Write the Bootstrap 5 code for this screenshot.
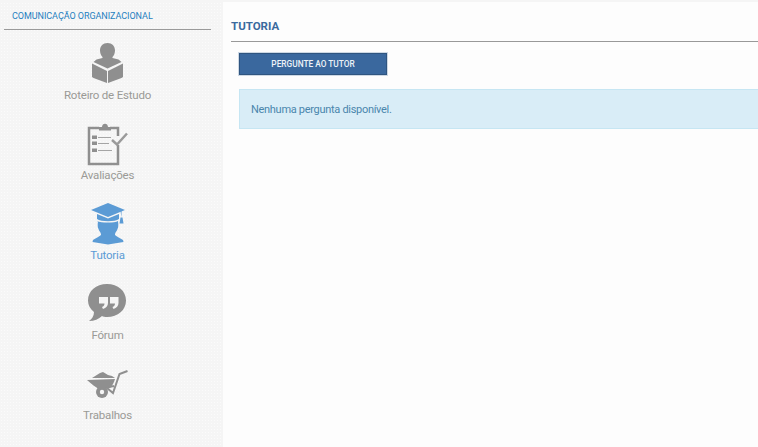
<!DOCTYPE html>
<html lang="pt">
<head>
<meta charset="utf-8">
<title>Tutoria</title>
<link href="https://cdn.jsdelivr.net/npm/bootstrap@5.3.0/dist/css/bootstrap.min.css" rel="stylesheet">
<style>
html,body{height:100%;overflow:hidden}
body{background:#f5f5f5;font-family:Roboto,"Liberation Sans",sans-serif;padding-top:2px}
.shell{height:445px}
.side{width:223px;flex:none;padding:0 12px 0 4px;background-image:radial-gradient(#fbfbfb .6px,transparent .8px);background-size:3px 3px}
.course{height:28px;border-bottom:1px solid #9a9a9a;padding-left:8px;padding-top:7px;font-size:9px;letter-spacing:-.05px;line-height:15px;color:#1f7fbf;white-space:nowrap}
.menu-entry{height:80px;color:#9a9a96;font-size:11.5px;letter-spacing:-.2px;line-height:14px;text-decoration:none}
.menu-entry:hover{color:#9a9a96}
.menu-entry.now,.menu-entry.now:hover{color:#5b9bd5}
.menu-entry svg{display:block;height:47px;width:60px}
.menu-wrap{padding-top:11px}
.pane{background:#fdfdfd;min-width:0}
.pane-title{margin:0 0 0 8px;height:40px;border-bottom:1px solid #999;padding-top:17px;font-size:11.5px;line-height:14px;font-weight:700;color:#3a6a9e}
.ask{display:block;width:148px;height:22px;margin:11px 0 0 16px;padding:0;background:#3a689e;border:1px solid #2f5580;border-radius:0;color:#eef3f8;font-size:8.3px;line-height:20px;font-weight:500;box-shadow:0 0 0 1px #cdd8e4}
.ask:hover{background:#3a689e;color:#eef3f8}
.notice{margin:14px 0 0 16px;height:40px;padding:0 11px;background:#d9edf7;border:1px solid #c6e6f3;border-right:0;border-radius:0;color:#4a86ad;font-size:11px;letter-spacing:-.3px;line-height:39px}
</style>
</head>
<body>
<div class="shell d-flex">
  <aside class="side">
    <div class="course">COMUNICAÇÃO ORGANIZACIONAL</div>
    <nav class="menu-wrap d-flex flex-column">
      <a href="#" class="menu-entry d-flex flex-column align-items-center">
        <svg viewBox="0 0 60 47" fill="#8f8f8f"><path d="M29.500 2c4.500 0 7.500 3 7.500 7.500 0 2.500-1 5-2.500 6.500v1l6 1.500 3 2.500-14 6.500-14-6.500 3-2.500 6-1.500v-1C23 14.500 22 12 22 9.500 22 5 25 2 29.500 2z"/><path d="M14 22.500l15 7.500V42L15.500 37 14 36z"/><path d="M45 22.500L30 30v12l13.500-5 1.500-1z"/></svg>
        <span>Roteiro de Estudo</span>
      </a>
      <a href="#" class="menu-entry d-flex flex-column align-items-center">
        <svg viewBox="0 0 60 47" fill="none"><path d="M21 7H11v36h29V24M32 7h8v8" stroke="#8f8f8f" stroke-width="2.500"/><path d="M21 9V6h3c0-4.500 6-4.500 6 0h3v3.500H21z" fill="#8f8f8f"/><path d="M14 14.500h5v3.500h-5zM14 20.500h5v3.500h-5zM14 27.500h5v3.500h-5z" fill="#8f8f8f"/><path d="M20 16.500h13M20 22.500h11M20 29.500h14" stroke="#a5a5a5"/><path d="M34 19l5 4.500 10-11" stroke="#9a9a9a" stroke-width="2.500"/></svg>
        <span>Avaliações</span>
      </a>
      <a href="#" class="menu-entry now d-flex flex-column align-items-center">
        <svg viewBox="0 0 60 47" fill="#5b9bd5"><path d="M30 2l17 7-17 7-17-7z"/><path d="M19 13l11 4.500L41 13v5c-4 3-18 3-22 0z"/><path d="M42.500 10h1v6.500h1l1 6h-4l1-6h1z"/><path d="M19 20c4 2 18 2 21 0 .5 4 .5 6-.5 8-.5 2-2.500 3.500-2.500 5.500 0 1.500 5 3.500 8 5.500l.5 2-15.500 2.500-15.500-2.500.5-2c3-2 8-4 8-5.500 0-2-2-3.500-2.500-5.500-1-2-1-4-.5-8z"/></svg>
        <span>Tutoria</span>
      </a>
      <a href="#" class="menu-entry d-flex flex-column align-items-center">
        <svg viewBox="0 0 60 47" fill="#8f8f8f"><path d="M29 3c11 0 19 7 19 16.500S40 36 29 36c-2 0-4-.3-5-1-3 3-8 5-13 5 3-2 5-5 5-9-4-3-6-7-6-11.500C10 10 18 3 29 3z"/><path d="M21 16h9v6c0 3-2 5-5 6l-1-2c1.500-.5 2.500-1.500 2.500-3.500H21zM32 16h8.500v6c0 3-2 5-5 6l-1-2c1.500-.5 2.500-1.500 2.500-3.500h-5z" fill="#f5f5f5"/></svg>
        <span>Fórum</span>
      </a>
      <a href="#" class="menu-entry d-flex flex-column align-items-center">
        <svg viewBox="0 0 60 47" fill="#8f8f8f"><path d="M14 17l8-5 3-1 5 3 4 1 3 2z"/><path d="M9 19l28-1c-1 4-3 7-5 9l-10 2c-4-3-9-6-13-10z"/><circle cx="24" cy="31" r="6"/><circle cx="24" cy="31" r="2.200" fill="#f5f5f5"/><path d="M29 27l6 5 6.500-19 8-3M36 25l-5 1" fill="none" stroke="#8f8f8f" stroke-width="2"/></svg>
        <span>Trabalhos</span>
      </a>
    </nav>
  </aside>
  <main class="pane flex-grow-1">
    <h1 class="pane-title">TUTORIA</h1>
    <a href="#" class="btn ask text-center">PERGUNTE AO TUTOR</a>
    <div class="alert notice" role="alert">Nenhuma pergunta disponível.</div>
  </main>
</div>
<script src="https://cdn.jsdelivr.net/npm/bootstrap@5.3.0/dist/js/bootstrap.bundle.min.js"></script>
</body>
</html>
